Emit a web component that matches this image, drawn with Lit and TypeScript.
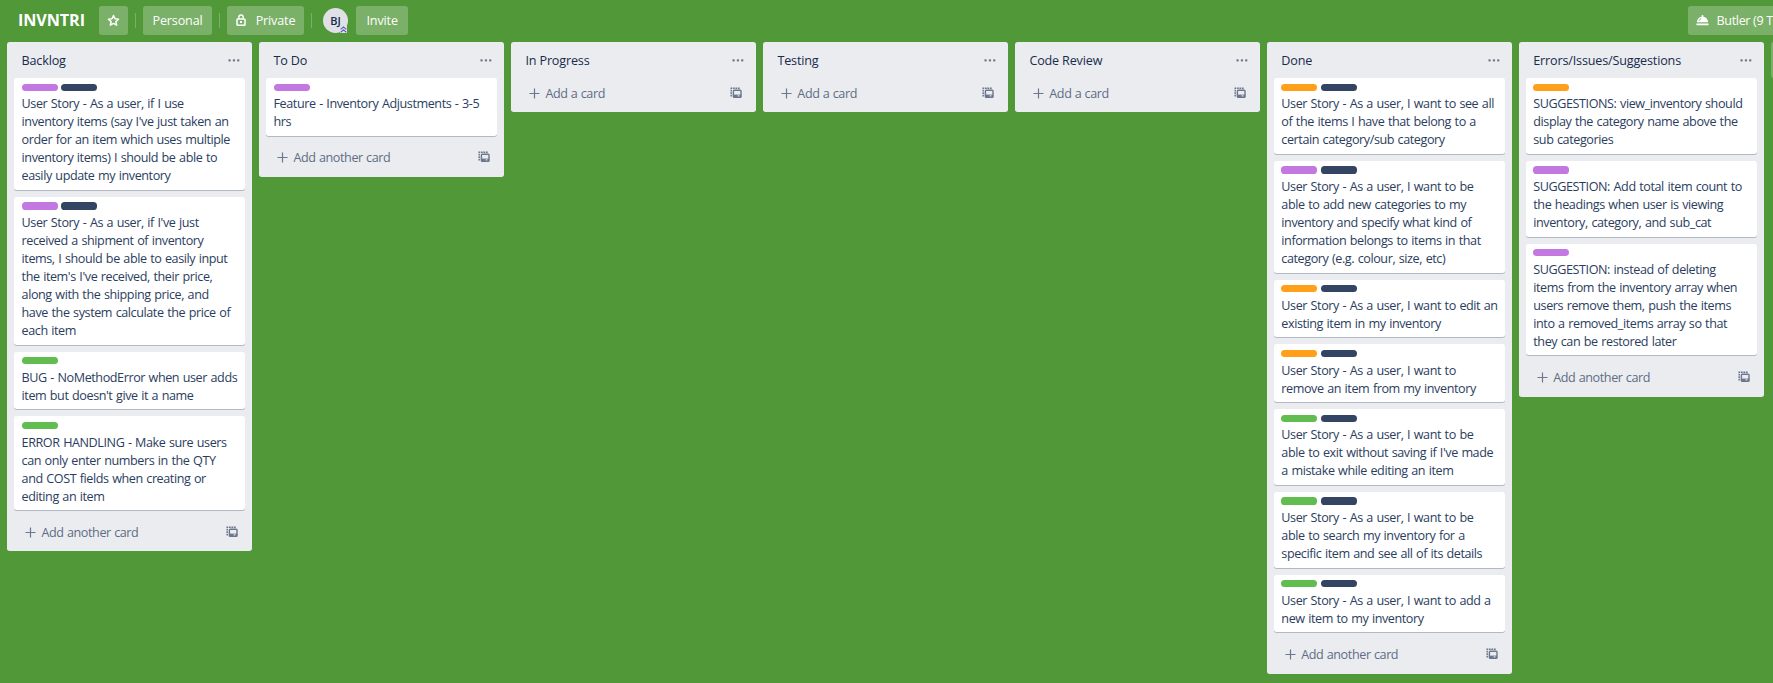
import { LitElement, html, css, svg } from "lit";
import { customElement, property } from "lit/decorators.js";

type Label = "purple" | "navy" | "green" | "orange";
interface Card { labels: Label[]; lines: string[] }
interface List { title: string; cards: Card[] }

const lists: List[] = [
  {
    title: "Backlog",
    cards: [
      { labels: ["purple", "navy"], lines: ["User Story - As a user, if I use", "inventory items (say I've just taken an", "order for an item which uses multiple", "inventory items) I should be able to", "easily update my inventory"] },
      { labels: ["purple", "navy"], lines: ["User Story - As a user, if I've just", "received a shipment of inventory", "items, I should be able to easily input", "the item's I've received, their price,", "along with the shipping price, and", "have the system calculate the price of", "each item"] },
      { labels: ["green"], lines: ["BUG - NoMethodError when user adds", "item but doesn't give it a name"] },
      { labels: ["green"], lines: ["ERROR HANDLING - Make sure users", "can only enter numbers in the QTY", "and COST fields when creating or", "editing an item"] },
    ],
  },
  { title: "To Do", cards: [{ labels: ["purple"], lines: ["Feature - Inventory Adjustments - 3-5", "hrs"] }] },
  { title: "In Progress", cards: [] },
  { title: "Testing", cards: [] },
  { title: "Code Review", cards: [] },
  {
    title: "Done",
    cards: [
      { labels: ["orange", "navy"], lines: ["User Story - As a user, I want to see all", "of the items I have that belong to a", "certain category/sub category"] },
      { labels: ["purple", "navy"], lines: ["User Story - As a user, I want to be", "able to add new categories to my", "inventory and specify what kind of", "information belongs to items in that", "category (e.g. colour, size, etc)"] },
      { labels: ["orange", "navy"], lines: ["User Story - As a user, I want to edit an", "existing item in my inventory"] },
      { labels: ["orange", "navy"], lines: ["User Story - As a user, I want to", "remove an item from my inventory"] },
      { labels: ["green", "navy"], lines: ["User Story - As a user, I want to be", "able to exit without saving if I've made", "a mistake while editing an item"] },
      { labels: ["green", "navy"], lines: ["User Story - As a user, I want to be", "able to search my inventory for a", "specific item and see all of its details"] },
      { labels: ["green", "navy"], lines: ["User Story - As a user, I want to add a", "new item to my inventory"] },
    ],
  },
  {
    title: "Errors/Issues/Suggestions",
    cards: [
      { labels: ["orange"], lines: ["SUGGESTIONS: view_inventory should", "display the category name above the", "sub categories"] },
      { labels: ["purple"], lines: ["SUGGESTION: Add total item count to", "the headings when user is viewing", "inventory, category, and sub_cat"] },
      { labels: ["purple"], lines: ["SUGGESTION: instead of deleting", "items from the inventory array when", "users remove them, push the items", "into a removed_items array so that", "they can be restored later"] },
    ],
  },
];

const icon = (w: number, h: number, body: unknown) =>
  html`<svg width=${w} height=${h} viewBox="0 0 ${w} ${h}" fill="none">${body}</svg>`;

const star = icon(13, 13, svg`<path d="M6.5 1.5 8 4.8l3.6.4-2.7 2.4.8 3.6-3.2-1.8-3.2 1.8.8-3.6L1.4 5.2 5 4.8z" stroke="#fff" stroke-width="1.5" stroke-linejoin="round"/>`);
const lock = icon(10, 12, svg`<path d="M2.8 5V3.2a2.2 2.2 0 0 1 4.4 0V5" stroke="#fff" stroke-width="1.4"/><rect x="1" y="5" width="8" height="6.2" rx=".8" stroke="#fff" stroke-width="1.5"/><rect x="4" y="7" width="2" height="2" fill="#fff"/>`);
const bell = icon(13, 12, svg`<path d="M.8 8.3c.2-3 2.2-5.2 4.9-5.6a1 1 0 1 1 1.6 0c2.7.4 4.7 2.6 4.9 5.6z" fill="#fff"/><path d="M3 6.8c.4-1.1 1.1-1.9 2.2-2.3" stroke="#7cb16b" stroke-width=".9"/><rect x=".4" y="9.4" width="12.2" height="1.8" rx=".4" fill="#fff"/>`);
const dots = icon(12, 3, svg`<g fill="#6b778c"><rect x=".4" y=".3" width="2.3" height="2.3" rx=".8"/><rect x="4.8" y=".3" width="2.3" height="2.3" rx=".8"/><rect x="9.1" y=".3" width="2.3" height="2.3" rx=".8"/></g>`);
const plus = icon(11, 11, svg`<path d="M5.5.5v10M.5 5.5h10" stroke="#6b778c" stroke-width="1.2"/>`);
const template = icon(12, 12, svg`<path d="M1.2 9.5V1.2h8.8" stroke="#6b778c" stroke-width="1.5" stroke-dasharray="1.8 .7"/><rect x="3.4" y="3.2" width="7.6" height="7" rx=".8" stroke="#6b778c" stroke-width="1.4"/><path d="M3.2 7.6h8v2.6h-8z" fill="#6b778c"/><path d="M7.6 8.3h1.8v1.1H7.6z" fill="#ebecf0"/>`);
const chevrons = icon(7, 7, svg`<path d="M.7 3.3 3.5 1l2.8 2.3M.7 6.2l2.8-2.3 2.8 2.3" stroke="#6554c0" stroke-width="1.1"/>`);

@customElement("board-list")
class BoardList extends LitElement {
  @property({ attribute: false }) list!: List;

  static styles = css`
    :host { display: block; flex: none; width: 244.8px; background: #ebecf0; border-radius: 2.7px; color: #172b4d; }
    svg { display: block; flex: none; }
    .head { display: flex; height: 36.2px; box-sizing: border-box; padding: 0 10.8px 0 14.4px; justify-content: space-between; }
    .title { margin: 0; font-size: 12.6px; line-height: 18px; padding-top: 10px; font-weight: 500; letter-spacing: -0.17px; white-space: nowrap; }
    .dots { padding: 17px 1px 0 0; }
    .cards { padding: 0 7.2px; }
    .card { background: #fff; border-radius: 2.7px; box-shadow: 0 1px 0 rgba(9, 30, 66, 0.25); padding: 5.4px 0 1.8px 7.2px; margin-bottom: 7.2px; }
    .labels { display: flex; gap: 3.6px; margin-bottom: 4.7px; }
    .label { width: 36px; height: 7.2px; border-radius: 3.6px; }
    .purple { background: #c377e0; }
    .navy { background: #344563; }
    .green { background: #61bd4f; }
    .orange { background: #ff9f1a; }
    .text { font-size: 12.6px; line-height: 18px; margin-bottom: 2.5px; font-weight: 400; color: #2b3d5e; letter-spacing: -0.42px; word-spacing: 0.7px; white-space: nowrap; }
    .line { display: block; }
    .foot { display: flex; height: 34.1px; box-sizing: border-box; padding: 6.4px 14.2px 0 18px; color: #5e6c84; font-size: 12.6px; line-height: 18px; }
    .plus { padding: 3px 5.3px 0 0; }
    .add { flex: 1; font-weight: 400; letter-spacing: -0.4px; word-spacing: 0.4px; white-space: nowrap; }
    .tpl { padding-top: 2px; }
  `;

  render() {
    const { title, cards } = this.list;
    return html`
      <div class="head"><h2 class="title">${title}</h2><span class="dots">${dots}</span></div>
      <div class="cards">
        ${cards.map((c) => html`<div class="card">
          <div class="labels">${c.labels.map((l) => html`<span class="label ${l}"></span>`)}</div>
          <div class="text">${c.lines.map((l) => html`<span class="line">${l}</span>`)}</div>
        </div>`)}
      </div>
      <div class="foot">
        <span class="plus">${plus}</span>
        <span class="add">${cards.length ? "Add another card" : "Add a card"}</span>
        <span class="tpl">${template}</span>
      </div>`;
  }
}

@customElement("app-root")
class AppRoot extends LitElement {
  static styles = css`
    :host { display: block; height: 683px; overflow: hidden; background: #519839; font-family: "Open Sans", "Noto Sans", sans-serif; font-stretch: 92%; }
    svg { display: block; flex: none; }
    .bar { display: flex; align-items: center; height: 42px; box-sizing: border-box; padding: 0 0 1.4px 18px; color: #fff; font-size: 12.6px; white-space: nowrap; }
    .name { margin: 0; width: 81px; font-size: 16.2px; font-weight: 700; line-height: 28px; letter-spacing: -0.1px; }
    .btn { display: flex; align-items: center; justify-content: center; flex: none; box-sizing: border-box; height: 28.8px; border-radius: 2.7px; background: rgba(255, 255, 255, 0.24); font-weight: 500; letter-spacing: -0.15px; }
    .star { width: 29px; }
    .personal { width: 69px; }
    .private { width: 77px; gap: 10px; }
    .invite { width: 52px; margin-left: 8px; }
    .butler { width: 190px; justify-content: flex-start; padding-left: 7.5px; gap: 8px; margin-left: auto; margin-right: -105px; letter-spacing: -0.35px; }
    .sep { width: 1px; height: 15px; margin: 0 7px; background: rgba(255, 255, 255, 0.24); flex: none; }
    .avatar { position: relative; width: 25.2px; height: 25.2px; margin-left: 4px; border-radius: 50%; background: #dfe1e6; color: #172b4d; font-size: 11px; font-weight: 600; line-height: 25px; text-align: center; }
    .rank { position: absolute; right: 1px; bottom: 0; background: #dfe1e6; }
    .lists { display: flex; align-items: flex-start; gap: 7.17px; padding-left: 7.2px; }
    .new { flex: none; width: 244.8px; height: 36px; border-radius: 2.7px; background: rgba(255, 255, 255, 0.24); }
  `;

  render() {
    return html`
      <header class="bar">
        <h1 class="name">INVNTRI</h1>
        <span class="btn star">${star}</span><span class="sep"></span>
        <span class="btn personal">Personal</span><span class="sep"></span>
        <span class="btn private">${lock}<span>Private</span></span><span class="sep"></span>
        <span class="avatar">BJ<span class="rank">${chevrons}</span></span>
        <span class="btn invite">Invite</span>
        <span class="btn butler">${bell}<span>Butler (9 Tips)</span></span>
      </header>
      <main class="lists">
        ${lists.map((l) => html`<board-list .list=${l}></board-list>`)}
        <div class="new"></div>
      </main>`;
  }
}
